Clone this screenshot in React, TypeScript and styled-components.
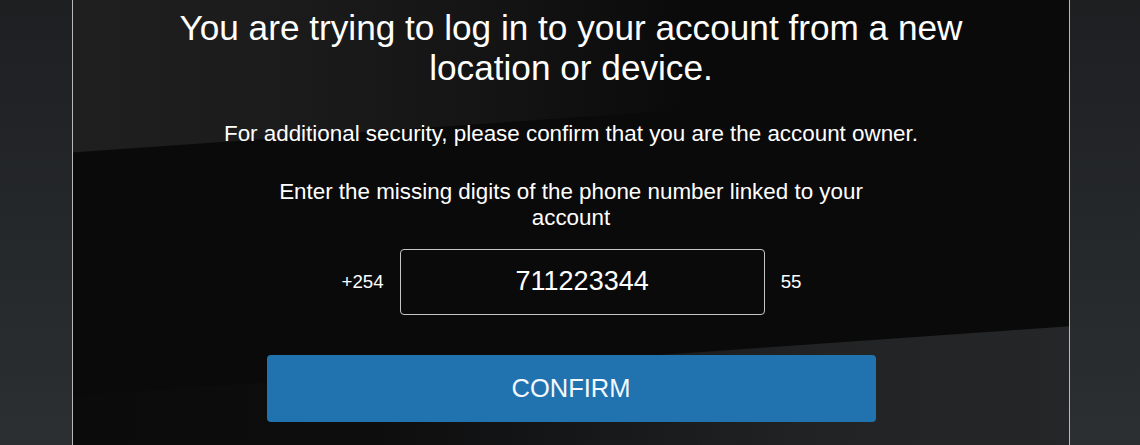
import React from "react";
import styled, { createGlobalStyle } from "styled-components";

const GlobalStyle = createGlobalStyle`
  html, body {
    margin: 0;
    padding: 0;
    height: 445px;
    overflow: hidden;
  }
  body {
    font-family: "Liberation Sans", Arial, Helvetica, sans-serif;
    background:
      linear-gradient(128deg, transparent 0 1118px, rgba(255,255,255,0.035) 1118px) no-repeat right top / 70px 110px,
      linear-gradient(to bottom, #1d1f21 0%, #24272a 45%, #2c2f32 100%);
    color: #ffffff;
  }
`;

const Page = styled.div`
  display: flex;
  height: 445px;
  box-sizing: border-box;
  padding: 0 70px 0 72px;
`;

const Panel = styled.main`
  flex: 1;
  display: flex;
  flex-direction: column;
  align-items: center;
  box-sizing: border-box;
  padding-top: 8px;
  border-left: 1px solid #b8b8b8;
  border-right: 1px solid #b8b8b8;
  background:
    linear-gradient(176deg, transparent 0 151.5px, #0a0a0a 152.5px 394.5px, transparent 395.5px),
    linear-gradient(to right, #1f1f1f 0%, #1b1b1b 22%, #141414 42%, #0a0a0a 62%, #0a0a0a 100%) no-repeat left top / 100% 160px,
    linear-gradient(to right, #0b0b0b 0%, #0d0d0e 30%, #18191a 55%, #222324 75%, #252627 100%) no-repeat left bottom / 100% 125px,
    #0a0a0a;
`;

const Title = styled.h1`
  margin: 0;
  font-size: 35.2px;
  line-height: 40px;
  font-weight: 400;
  text-align: center;
  color: #ffffff;
  max-width: 800px;
`;

const Text = styled.p<{ $top: number; $maxWidth?: number }>`
  margin: ${(p) => p.$top}px 0 0;
  font-size: 22.4px;
  line-height: 26.4px;
  text-align: center;
  color: #ffffff;
  max-width: ${(p) => (p.$maxWidth ? `${p.$maxWidth}px` : "none")};
`;

const PhoneRow = styled.div`
  display: flex;
  align-items: center;
  gap: 16px;
  margin-top: 17px;
  padding-left: 1px;
`;

const Affix = styled.span`
  font-size: 18.7px;
  color: #ffffff;
`;

const DigitsInput = styled.input`
  width: 365px;
  height: 66px;
  box-sizing: border-box;
  border: 1px solid #c4c4c4;
  border-radius: 4px;
  background: transparent;
  color: #ffffff;
  font-family: inherit;
  font-size: 27px;
  text-align: center;
  outline: none;
`;

const ConfirmButton = styled.button`
  margin-top: 40px;
  width: 609px;
  height: 67px;
  border: none;
  border-radius: 4px;
  background: #2173b0;
  color: #f4f8fc;
  font-family: inherit;
  font-size: 25.5px;
  text-transform: uppercase;
  cursor: pointer;
`;

export default function App() {
  return (
    <>
      <GlobalStyle />
      <Page>
        <Panel>
          <Title>You are trying to log in to your account from a new location or device.</Title>
          <Text $top={33.3}>For additional security, please confirm that you are the account owner.</Text>
          <Text $top={31.1} $maxWidth={620}>
            Enter the missing digits of the phone number linked to your account
          </Text>
          <PhoneRow>
            <Affix>+254</Affix>
            <DigitsInput type="text" readOnly value="711223344" aria-label="Missing digits" />
            <Affix>55</Affix>
          </PhoneRow>
          <ConfirmButton type="button">Confirm</ConfirmButton>
        </Panel>
      </Page>
    </>
  );
}
